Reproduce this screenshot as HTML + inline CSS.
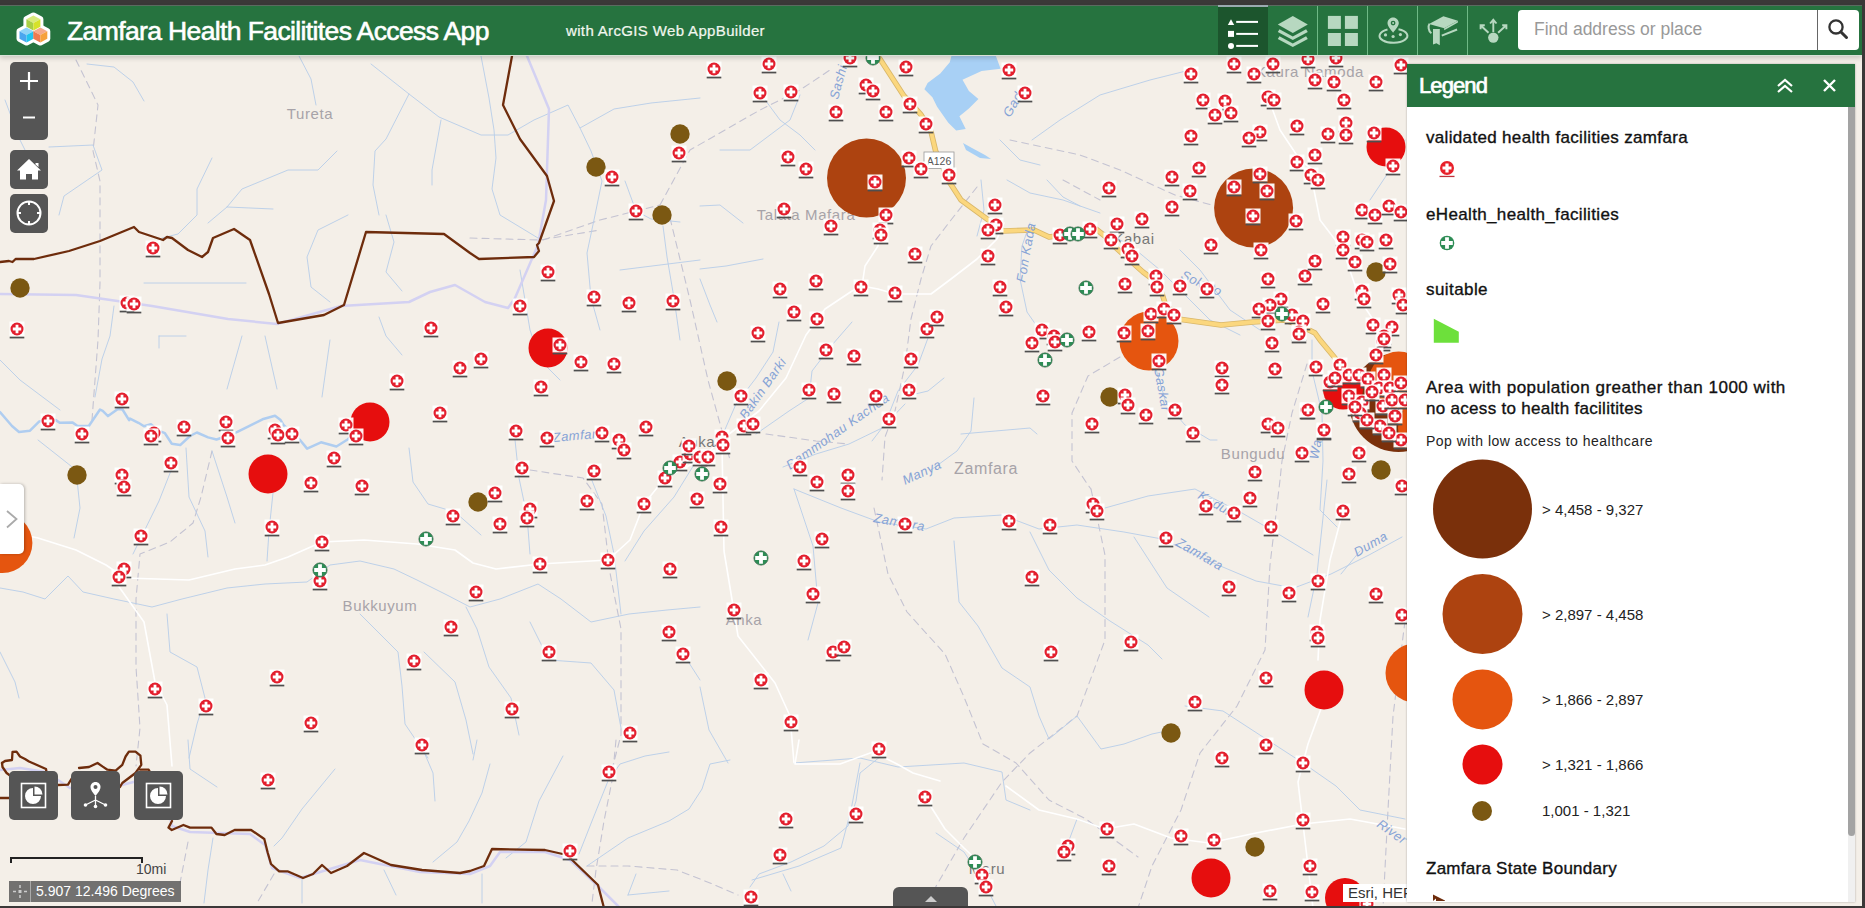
<!DOCTYPE html>
<html><head><meta charset="utf-8">
<style>
*{box-sizing:border-box;margin:0;padding:0}
html,body{width:1865px;height:908px;overflow:hidden;background:#f4efe8;font-family:"Liberation Sans",sans-serif}
#map{position:absolute;left:0;top:0}
#topstrip{position:absolute;left:0;top:0;width:1865px;height:5px;background:#3b3838}
#header{position:absolute;left:0;top:5px;width:1862px;height:50px;background:#26733f;border-top:1px solid #5b6a60;box-shadow:0 1px 0 #d8e2d8,0 3px 5px rgba(0,0,0,.18)}
#title{position:absolute;left:67px;top:10px;color:#fff;font-size:26.5px;letter-spacing:-0.62px;white-space:nowrap;-webkit-text-stroke:0.6px #fff}
#subtitle{position:absolute;left:566px;top:16px;color:#eef5ea;font-size:15px;letter-spacing:0.35px;white-space:nowrap;-webkit-text-stroke:0.2px #fff}
.tab{position:absolute;top:0;width:50px;height:50px}
.tab.active{background:#1c552d;border-top:2px solid #9aa9b0}
.div{position:absolute;top:0;width:1px;height:50px;background:#6fb986}
#search{position:absolute;left:1518px;top:4px;width:340px;height:42px;background:#fff;border-radius:4px}
#search .ph{position:absolute;left:16px;top:10px;font-size:19px;color:#999}
#search .sep{position:absolute;left:298px;top:0;width:1px;height:42px;background:#777}
#rborder{position:absolute;left:1862px;top:0;width:3px;height:908px;background:#3b3838}
#bborder{position:absolute;left:0;top:906px;width:1865px;height:2px;background:#3b3838}
#legend{position:absolute;left:1407px;top:64px;width:448px;height:838px;background:#fff;box-shadow:0 0 2px rgba(0,0,0,.3)}
#lhead{position:absolute;left:0;top:0;width:448px;height:43px;background:#26733f}
#lhead .t{position:absolute;left:12px;top:9px;font-size:22px;letter-spacing:-0.9px;color:#fff;-webkit-text-stroke:0.7px #fff}
#ltrack{position:absolute;left:441px;top:43px;width:7px;height:795px;background:#f0f0f0}
#lthumb{position:absolute;left:441px;top:43px;width:7px;height:729px;background:#a3a3a3;border-radius:0 0 4px 4px}
.lt{position:absolute;left:19px;font-size:17px;color:#111;white-space:nowrap;-webkit-text-stroke:0.35px #111}
.ls{position:absolute;left:19px;font-size:14px;color:#222;white-space:nowrap}
.lv{position:absolute;left:135px;font-size:15px;color:#222;white-space:nowrap}
.ctl{position:absolute;background:#555;border-radius:5px}
#coords{position:absolute;left:9px;top:881px;width:172px;height:21px;background:rgba(90,90,90,.85)}
#coords .tx{position:absolute;left:27px;top:2px;font-size:14px;color:#fff;white-space:nowrap}
#coords .sep{position:absolute;left:21px;top:0;width:1px;height:21px;background:#aaa}
#attr{position:absolute;left:1343px;top:884px;width:64px;height:18px;background:#fff;font-size:15px;line-height:17px;color:#333;padding-left:5px;white-space:nowrap;overflow:hidden}
#scale{position:absolute;left:10px;top:857px;width:133px;height:6px;border:2px solid #222;border-bottom:none}
#scaletx{position:absolute;left:136px;top:861px;font-size:14px;color:#444}
#panelbtn{position:absolute;left:0;top:484px;width:24px;height:70px;background:#fff;border-radius:0 5px 5px 0;box-shadow:1px 0 3px rgba(0,0,0,.25)}
#bottombtn{position:absolute;left:893px;top:887px;width:75px;height:21px;background:#555;border-radius:6px 6px 0 0}
</style></head><body>
<svg id="map" width="1865" height="908" viewBox="0 0 1865 908">
<defs>
<g id="m"><rect x="-7.5" y="-7.5" width="15" height="15" fill="#fff" fill-opacity="0.95"/><circle r="6.5" fill="#e31e2d"/><path d="M-1.4,-4.2h2.8v2.8h2.8v2.8h-2.8v2.8h-2.8v-2.8h-2.8v-2.8h2.8z" fill="#fff"/><rect x="-7.3" y="7.7" width="14.6" height="1.7" fill="#4e4e4e"/></g>
<g id="g"><circle r="7.2" fill="#2d8c55" stroke="#4a6a55" stroke-width="0.6"/><path d="M-1.9,-5.8h3.8v3.9h3.9v3.8h-3.9v3.9h-3.8v-3.9h-3.9v-3.8h3.9z" fill="#fff"/></g>
</defs>
<rect x="0" y="0" width="1865" height="908" fill="#f4efe8"/>
<g fill="none" stroke-linejoin="round" stroke-linecap="round">
<!-- admin dashed lines -->
<g stroke="#c4c3d2" stroke-width="1.1" stroke-dasharray="7,5">
<path d="M76,60 L98,105 L93,151 L100,181 L100,283 L98,340 L92,420"/>
<path d="M212,451 L201,497 L193,523 L170,542 L140,554 L136,599 L136,667 L140,728 L136,766"/>
<path d="M530,470 L583,478 L602,504 L610,573 L621,629 L621,735 L610,777"/>
<path d="M543,240 L600,220 L660,205"/>
<path d="M660,205 L690,150 L760,110 L800,90 L830,70"/>
<path d="M470,238 L540,240 L600,230"/>
<path d="M670,218 L690,300 L708,380 L730,460"/>
<path d="M1010,140 L1080,155 L1120,170 L1175,195 L1230,210"/>

<path d="M874,508 L888,574 L907,612 L945,654 L964,697 L983,744 L1016,763 L1049,800 L1086,819 L1138,857"/>
<path d="M1091,489 L1105,555 L1105,640 L1077,716 L1030,753 L1002,782 L964,838 L931,895"/>
<path d="M1280,480 L1270,565 L1265,650 L1237,706 L1200,753 L1181,810 L1152,866 L1138,908"/>
<path d="M1405,621 L1393,716 L1388,810 L1383,908"/>

<path d="M616,740 L612,781 L604,821 L596,870 L592,903"/>
<path d="M587,866 L628,866 L677,870 L710,883 L738,895"/>
<path d="M188,842 L180,883"/>
<path d="M274,874 L257,903"/>

<path d="M977,187 L951,220 L931,246 L921,279 L911,319 L905,365 L895,411 L885,437 L882,480"/>
<path d="M766,434 L816,441 L849,444"/>
<path d="M1063,180 L1100,200"/>

<path d="M1120,357 L1088,376 L1072,413 L1072,461 L1088,485 L1091,489"/>
<path d="M1307,364 L1292,413 L1282,461 L1280,480"/>
</g>
<!-- streams -->
<g stroke="#b7cde9" stroke-width="0.9">
<path d="M720,150 L750,150 L770,135 L790,120 L800,95"/>
<path d="M760,93 L780,120 L800,135 L815,150"/>
<path d="M1032,140 L1060,120 L1100,95 L1150,80 L1190,70"/>
<path d="M1000,140 L1020,160 L1040,165"/>
<path d="M1180,250 L1200,270 L1230,310 L1260,330"/>
<path d="M1100,230 L1130,245 L1160,270 L1190,300 L1210,320 L1240,335"/>
<path d="M1405,140 L1390,170 L1370,200"/>

<path d="M87,64 L114,67 L133,82 L144,101"/>
<path d="M49,147 L93,145 L102,170 L64,196 L59,215"/>
<path d="M299,56 L311,79 L316,105"/>
<path d="M371,64 L409,94 L439,117 L481,135 L508,135 L534,120 L568,105 L580,128 L614,109 L651,103 L700,98"/>
<path d="M409,94 L386,139 L375,151 L373,185 L379,215"/>
<path d="M441,120 L432,170 L432,185"/>
<path d="M481,56 L489,98 L494,130 L496,158 L492,189 L500,215 L538,238"/>
<path d="M212,158 L197,189 L197,215 L178,234 L162,238"/>
<path d="M337,151 L318,170 L288,170 L242,189 L227,207 L208,223"/>
<path d="M273,209 L227,207"/>
<path d="M348,215 L318,230 L307,257 L311,287 L330,302"/>
<path d="M386,215 L394,242 L386,272 L402,291"/>
<path d="M580,128 L591,151 L602,181 L595,215 L587,253 L591,298 L600,330"/>
<path d="M625,181 L636,211 L651,219 L680,222"/>
<path d="M663,226 L667,257 L674,298 L680,340"/>
<path d="M114,306 L110,336 L102,359 L95,397"/>
<path d="M144,283 L246,283"/>
<path d="M159,336 L186,336 M159,336 L159,348"/>
<path d="M242,336 L227,389"/>
<path d="M265,336 L277,389"/>
<path d="M330,340 L322,397"/>
<path d="M379,317 L386,336 L402,355"/>
<path d="M5,100 L20,140 L30,160"/>
<path d="M0,360 L20,380 L40,395 L60,410"/>
<path d="M520,270 L530,330 L540,360 L560,380"/>
<path d="M620,270 L660,265 L700,260"/>

<path d="M0,588 L23,592 L45,599 L68,576 L83,592 L114,599 L152,607 L182,599 L227,588 L265,584 L307,582 L330,565 L360,561 L394,569 L417,580 L447,595 L470,607 L500,599 L538,584 L561,599 L591,622 L629,614 L667,610 L700,607"/>
<path d="M360,614 L398,652 L402,686 L405,724 L428,758"/>
<path d="M424,652 L455,682 L466,720 L473,754"/>
<path d="M466,607 L477,629 L489,667 L511,698 L519,735"/>
<path d="M530,622 L549,660 L591,663 L614,690 L621,728"/>
<path d="M167,614 L170,652 L197,667 L205,698 L197,724 L189,758"/>
<path d="M0,652 L15,682 L19,698"/>
<path d="M38,440 L76,470 L80,508 L74,538"/>
<path d="M174,463 L159,501 L133,554"/>
<path d="M186,448 L189,497 L205,531 L208,557"/>
<path d="M212,451 L227,497 L235,523"/>
<path d="M273,493 L269,531 L267,561"/>
<path d="M409,448 L413,482 L428,504 L455,512 L481,535"/>
<path d="M515,440 L519,478 L527,516 L530,554"/>
<path d="M591,478 L606,516 L614,554 L621,614"/>
<path d="M682,652 L700,680"/>

<path d="M794,489 L841,508 L879,522 L926,529 L954,518 L1002,515 L1039,529 L1077,525 L1124,532 L1162,539 L1218,565 L1256,581 L1294,588 L1331,574 L1369,555 L1402,537"/>
<path d="M1105,508 L1148,496 L1195,489 L1242,513 L1275,532 L1313,555"/>
<path d="M1030,532 L1049,570 L1077,598 L1110,621 L1148,645 L1162,659"/>
<path d="M954,541 L959,602 L978,626 L1002,668 L1030,687 L1039,716 L1049,739 L1077,716 L1101,749 L1124,744 L1152,734 L1171,730"/>
<path d="M1134,537 L1167,588 L1209,617"/>
<path d="M1185,706 L1223,711 L1266,739 L1303,763 L1336,786 L1360,810 L1405,819"/>
<path d="M1327,480 L1322,527 L1317,574 L1308,617"/>
<path d="M1360,551 L1341,574"/>
<path d="M794,489 L813,546 L818,603 L808,640"/>
<path d="M700,687 L709,730 L728,763"/>
<path d="M1068,843 L1077,819 L1105,829"/>

<path d="M794,763 L860,758 L898,767 L964,763 L1002,772 L1006,800 L1030,810"/>
<path d="M860,763 L851,810 L841,848 L799,866 L752,880"/>
<path d="M936,833 L964,852 L983,881 L997,908"/>
<path d="M188,740 L190,769 L217,787"/>
<path d="M335,769 L302,809 L282,838 L274,846"/>
<path d="M424,752 L433,773 L435,801"/>
<path d="M477,740 L473,760"/>
<path d="M490,764 L482,793 L469,821 L457,842 L433,862"/>
<path d="M563,756 L539,801 L526,842 L506,858"/>
<path d="M669,752 L645,756 L620,764 L608,781 L592,821 L579,854"/>
<path d="M730,760 L710,764 L702,789 L689,809 L669,821 L628,838 L587,866"/>
<path d="M881,756 L860,773 L856,801 L848,826 L824,846 L791,862 L759,874 L750,887"/>
<path d="M783,874 L791,891"/>
<path d="M384,870 L396,895"/>
<path d="M213,838 L208,870 L204,903"/>
<path d="M302,879 L302,903"/>
<path d="M482,874 L482,903"/>
<path d="M636,874 L628,895 M628,895 L669,891"/>

<path d="M700,455 L674,497 L644,531 L625,561"/>
<path d="M1030,223 L1022,246 L1020,279 L1027,312 L1043,335"/>
<path d="M779,322 L773,352 L756,378 L736,404 L720,441"/>
<path d="M852,322 L832,345 L812,371 L809,398 L789,411 L756,434"/>
<path d="M928,338 L918,365 L898,391 L885,424 L872,441"/>
<path d="M944,378 L928,391 L911,395"/>
<path d="M783,467 L816,454 L849,444 L882,428 L905,404"/>
<path d="M974,398 L971,431 L957,451 L931,470"/>
<path d="M700,269 L726,266 L763,259"/>
<path d="M700,206 L720,205 L743,223"/>
<path d="M700,279 L710,305 L717,322"/>
<path d="M981,180 L984,210 L977,236"/>
<path d="M1007,180 L1030,193 L1063,200 L1100,213"/>
<path d="M1047,180 L1063,197 L1080,206"/>
<path d="M961,434 L1030,428 L1037,434"/>

<path d="M1156,369 L1166,403 L1185,425 L1210,440 L1217,440"/>
<path d="M1312,340 L1312,371 L1322,413 L1323,461 L1320,510 L1337,527"/>
</g>
<!-- wide rivers -->
<g stroke="#afcdf0" stroke-width="2.5">
<path d="M0,412 L12,426 L19,432 L30,430.7 L39.3,421.4 L47,420 L55.8,420.1 L59.7,422.8 L72.3,422.4 L77.6,426 L88.8,426 L100,409.5 L102.7,410.9 L108,416.1 L117.9,408.9 L122.5,409.5 L129.1,420.1 L130,418.6 L138.4,422.8 L144,426.3 L150.9,424.2 L157.9,430.4 L164.9,433.2 L171.8,443.7 L180.2,445.1 L190,436 L196.9,432.5 L208.1,437.4 L216.5,439.5 L224.8,436.7 L237.4,431.8 L248.5,426.3 L262.5,419.3 L275,415.8 L280.6,420 L283.4,424.9 L300.2,440.2 L307.1,448.6 L321,442.3 L336.4,446.5 L347.6,439.5 L353.1,434.6 L360,432 L370,422"/>
</g>
<g stroke="#d3d1f2" stroke-width="2.5">
<path d="M0,294 L76,295 L152,306 L228,319 L277,324 L341,306 L409,302 L430,292 L455,285 L485,302 L508,308 L515,298 L538,245 L546,200 L549,109 L527,56"/>
<path d="M0,770 L20,768 L46,772 L70,788 L122,785 L160,775 L172,826 L190,832 L250,834 L265,845 L272,868 L300,878 L360,860 L420,872 L470,874 L490,866 L500,852 L545,852 L570,860 L600,888 L620,908"/>
</g>
<!-- white roads -->
<g stroke="#ffffff" stroke-width="1.6">
<path d="M0,530 L38,538 L76,550 L106,565 L125,578 L189,580 L235,569 L265,565 L288,557 L322,542 L364,540 L417,544 L455,550 L473,563 L496,569 L540,564 L608,560 L630,540 L644,504 L665,478 L700,460 L720,441 L759,411 L786,378 L806,335 L825,309 L852,291 L862,286 L878,289 L895,294 L931,294 L951,279 L977,259 L997,239 L1004,223"/>
<path d="M862,286 L865,266 L878,246 L880,233"/>
<path d="M722,445 L724,551 L738,636 L775,683 L790,716 L794,763"/>
<path d="M1006,786 L1039,810 L1077,819 L1105,829 L1134,824 L1171,838 L1209,843 L1256,833 L1303,824 L1350,819 L1405,829"/>
<path d="M1322,706 L1308,744 L1298,782 L1303,824 L1308,866 L1313,908"/>
<path d="M921,791 L945,829 L964,848 L983,866"/>
<path d="M117,584 L144,622 L155,682 L167,705 L172,766"/>
<path d="M1343,511 L1330,560 L1320,620 L1318,660"/>
<path d="M1311,175 L1320,220 L1343,250 L1360,300 L1380,330"/>
<path d="M1268,97 L1280,130 L1300,160 L1320,175"/>
</g>
<path d="M799,740 L795,764 L840,764 L873,752 L897,764 L913,773 L940,781" stroke="#fff" stroke-width="1.6"/>
<!-- main road -->
<path d="M880,59 L903.8,95.7 L921,114.7 L930.8,130.6 L935.6,151 L950,183 L961,200 L987,219 L1003,231 L1034,230 L1049,237 L1071,234 L1096,229 L1106,237 L1115,247 L1143,272 L1159,284 L1165,303 L1178,319 L1221,325 L1253,322 L1284,320 L1299,325 L1315,333 L1320,340 L1335,358" stroke="#d9b76a" stroke-width="5.5"/>
<path d="M880,59 L903.8,95.7 L921,114.7 L930.8,130.6 L935.6,151 L950,183 L961,200 L987,219 L1003,231 L1034,230 L1049,237 L1071,234 L1096,229 L1106,237 L1115,247 L1143,272 L1159,284 L1165,303 L1178,319 L1221,325 L1253,322 L1284,320 L1299,325 L1315,333 L1320,340 L1335,358" stroke="#fbd77e" stroke-width="3.8"/>
</g>
<!-- lake -->
<path d="M951.4,56 L995.9,56 L1000.6,68.7 L981.6,71 L962.5,79.8 L968.9,90.9 L978.4,98.9 L968.9,108.4 L959.4,116.3 L965.7,129 L956.2,130.6 L948.3,122.7 L937.1,106.8 L932.4,97.3 L924.4,89.3 L927.6,83 L940.3,73.5 L949.8,62.3 Z" fill="#a8d0f5"/>
<path d="M963,143 L972,148 L985,155 L991,159 L980,158 L966,150 Z" fill="#a8d0f5"/>
<!-- shield -->
<rect x="924" y="152" width="30" height="16.5" fill="#fff" stroke="#9a9a9a" stroke-width="0.8"/>
<text x="939" y="164.5" font-family="Liberation Sans, sans-serif" font-size="10.5" fill="#555" text-anchor="middle">A126</text>
<!-- boundary -->
<g fill="none" stroke="#6e2c0c" stroke-width="2.3" stroke-linejoin="round" stroke-linecap="round">
<path d="M0,262 L9,261 L12.5,262 L15.6,259 L34,259 L69,251 L100,241 L134,227 L139,232 L163,240 L167,237 L172,238 L188,250 L202,257 L208,252 L213,238 L234,229 L250,240 L269,294 L278,323 L324,315 L344,305 L366,232 L444,234 L470,253 L479,259 L534,257 L539,251 L537,245 L539,243 L554,201 L547,176 L520,139 L503,105 L512,56"/>
<path d="M9,798 L0,798"/>
<path d="M2,763 L5,761 L12,760 L12.5,752 L16.5,751.6 L20,756.5 L25,759 L29,761.5 L46,769 L47,775"/>
<path d="M2,763 L2.5,767 L6.6,773 L12,777"/>
<path d="M58,785 L68,784.6 L72,778"/>
<path d="M79,768 L89,767 L97.5,763 L102.4,766.4 L107.4,769.7 L115.6,770.6 L122.3,764.8 L125.6,756.5 L128.9,751.6 L135.5,751.6 L140.4,755.7 L141.3,764.8 L135.5,773 L128.9,778 L122.3,783 L120,787"/>
<path d="M140,769.7 L148.7,769.7 L150,772"/>
<path d="M172,821 L168.5,827.6 L171.8,830 L183.4,825 L190,827.6 L211.5,827.6 L216.4,834 L224.7,835 L234.6,830 L251.1,830 L264.3,839 L267.6,852.3 L271,864 L279.2,871.3 L287.5,871.3 L303,878 L313,874 L322,865 L331,873 L347,866 L364,853 L391,865 L422,870 L460,873 L470,871 L484,866 L492,849 L545,850 L567,855 L598,885 L604,908"/>
</g>
<!-- labels -->
<g font-family="Liberation Sans, sans-serif" fill="#a7a3a8" font-size="15" letter-spacing="0.6" text-anchor="middle">
<text x="310" y="119">Tureta</text>
<text x="806" y="220">Talata Mafara</text>
<text x="1310" y="77">Kaura Namoda</text>
<text x="986" y="474" font-size="16">Zamfara</text>
<text x="1253" y="459">Bungudu</text>
<text x="380" y="611">Bukkuyum</text>
<text x="697" y="447" fill="#777">Anka</text>
<text x="744" y="625">Anka</text>
<text x="987" y="874" fill="#777">Maru</text>
<text x="1134" y="244" fill="#777">Kabai</text>
</g>
<g font-family="Liberation Sans, sans-serif" fill="#86a3d6" font-size="13" font-style="italic" letter-spacing="0.5">
<text transform="translate(838,100) rotate(-75)">Sashi</text>
<text transform="translate(1010,118) rotate(-60)">Gada</text>
<text transform="translate(1025,283) rotate(-80)">Fon Kada</text>
<text transform="translate(746,420) rotate(-55)">Bakin Barki</text>
<text transform="translate(790,470) rotate(-35)">Dammohau Kachea</text>
<text transform="translate(905,485) rotate(-25)">Manya</text>
<text transform="translate(553,442) rotate(-5)">Zamfara</text>
<text transform="translate(873,522) rotate(10)">Zamfara</text>
<text transform="translate(1175,545) rotate(30)">Zamfara</text>
<text transform="translate(1197,498) rotate(30)">Kaduna</text>
<text transform="translate(1357,557) rotate(-30)">Duma</text>
<text transform="translate(1154,368) rotate(80)">Gaskar</text>
<text transform="translate(1318,460) rotate(-80)">Wa</text>
<text transform="translate(1376,826) rotate(35)">River</text>
<text transform="translate(1180,278) rotate(25)">Sokoto</text>
</g>

<circle cx="1398.5" cy="402.5" r="49.5" fill="#7a300b"/>
<circle cx="1428" cy="428" r="30" fill="#e5550f"/>
<circle cx="866.5" cy="178" r="39.5" fill="#ad4310"/>
<circle cx="1253.6" cy="208" r="39.5" fill="#ad4310"/>
<circle cx="1149" cy="341" r="29.5" fill="#e5550f"/>
<circle cx="1398.7" cy="381.6" r="30" fill="#e5550f"/>
<circle cx="2.4" cy="543" r="30" fill="#e5550f"/>
<circle cx="1415" cy="673" r="29.5" fill="#e5550f"/>
<circle cx="1386" cy="147" r="19.5" fill="#e60e0e"/>
<circle cx="268" cy="474" r="19.5" fill="#e60e0e"/>
<circle cx="370" cy="422" r="19.5" fill="#e60e0e"/>
<circle cx="548" cy="348" r="19.5" fill="#e60e0e"/>
<circle cx="1343" cy="389.5" r="20" fill="#e60e0e"/>
<circle cx="1324" cy="690" r="19.5" fill="#e60e0e"/>
<circle cx="1211" cy="878" r="19.5" fill="#e60e0e"/>
<circle cx="1345" cy="898" r="20" fill="#e60e0e"/>
<circle cx="20" cy="288" r="9.7" fill="#7b5812"/>
<circle cx="680" cy="134" r="9.7" fill="#7b5812"/>
<circle cx="596" cy="167" r="9.7" fill="#7b5812"/>
<circle cx="662" cy="215" r="9.7" fill="#7b5812"/>
<circle cx="1376" cy="272" r="9.7" fill="#7b5812"/>
<circle cx="77" cy="475" r="9.7" fill="#7b5812"/>
<circle cx="727" cy="381" r="9.7" fill="#7b5812"/>
<circle cx="478" cy="502" r="9.7" fill="#7b5812"/>
<circle cx="1110" cy="397" r="9.7" fill="#7b5812"/>
<circle cx="1381" cy="470" r="9.7" fill="#7b5812"/>
<circle cx="1171" cy="733" r="9.7" fill="#7b5812"/>
<circle cx="1255" cy="847" r="9.7" fill="#7b5812"/>
<use href="#m" x="153" y="248"/>
<use href="#m" x="127" y="303"/>
<use href="#m" x="134" y="304"/>
<use href="#m" x="17" y="329"/>
<use href="#m" x="431" y="328"/>
<use href="#m" x="714" y="69"/>
<use href="#m" x="769" y="64"/>
<use href="#m" x="850" y="58"/>
<use href="#m" x="906" y="67"/>
<use href="#m" x="760" y="93"/>
<use href="#m" x="791" y="92"/>
<use href="#m" x="866" y="85"/>
<use href="#m" x="873" y="91"/>
<use href="#m" x="836" y="112"/>
<use href="#m" x="886" y="112"/>
<use href="#m" x="910" y="104"/>
<use href="#m" x="926" y="124"/>
<use href="#m" x="788" y="157"/>
<use href="#m" x="806" y="169"/>
<use href="#m" x="909" y="158"/>
<use href="#m" x="921" y="169"/>
<use href="#m" x="679" y="153"/>
<use href="#m" x="612" y="177"/>
<use href="#m" x="636" y="211"/>
<use href="#m" x="784" y="209"/>
<use href="#m" x="831" y="226"/>
<use href="#m" x="875" y="182"/>
<use href="#m" x="886" y="215"/>
<use href="#m" x="880" y="230"/>
<use href="#m" x="881" y="235"/>
<use href="#m" x="915" y="254"/>
<use href="#m" x="548" y="272"/>
<use href="#m" x="594" y="297"/>
<use href="#m" x="629" y="303"/>
<use href="#m" x="673" y="301"/>
<use href="#m" x="520" y="306"/>
<use href="#m" x="780" y="289"/>
<use href="#m" x="816" y="281"/>
<use href="#m" x="861" y="287"/>
<use href="#m" x="895" y="293"/>
<use href="#m" x="794" y="312"/>
<use href="#m" x="817" y="319"/>
<use href="#m" x="758" y="333"/>
<use href="#m" x="927" y="329"/>
<use href="#m" x="937" y="317"/>
<use href="#m" x="1009" y="70"/>
<use href="#m" x="1025" y="93"/>
<use href="#m" x="949" y="175"/>
<use href="#m" x="995" y="205"/>
<use href="#m" x="996" y="225"/>
<use href="#m" x="988" y="230"/>
<use href="#m" x="988" y="256"/>
<use href="#m" x="1000" y="287"/>
<use href="#m" x="1006" y="307"/>
<use href="#m" x="1060" y="235"/>
<use href="#m" x="1090" y="229"/>
<use href="#m" x="1109" y="188"/>
<use href="#m" x="1117" y="224"/>
<use href="#m" x="1142" y="219"/>
<use href="#m" x="1111" y="240"/>
<use href="#m" x="1128" y="249"/>
<use href="#m" x="1132" y="256"/>
<use href="#m" x="1125" y="284"/>
<use href="#m" x="1156" y="276"/>
<use href="#m" x="1157" y="287"/>
<use href="#m" x="1180" y="286"/>
<use href="#m" x="1207" y="289"/>
<use href="#m" x="1172" y="177"/>
<use href="#m" x="1199" y="168"/>
<use href="#m" x="1190" y="191"/>
<use href="#m" x="1172" y="207"/>
<use href="#m" x="1191" y="74"/>
<use href="#m" x="1191" y="136"/>
<use href="#m" x="1234" y="64"/>
<use href="#m" x="1273" y="64"/>
<use href="#m" x="1254" y="74"/>
<use href="#m" x="1308" y="59"/>
<use href="#m" x="1336" y="58"/>
<use href="#m" x="1315" y="80"/>
<use href="#m" x="1334" y="82"/>
<use href="#m" x="1376" y="82"/>
<use href="#m" x="1401" y="65"/>
<use href="#m" x="1203" y="100"/>
<use href="#m" x="1225" y="101"/>
<use href="#m" x="1231" y="113"/>
<use href="#m" x="1215" y="115"/>
<use href="#m" x="1268" y="97"/>
<use href="#m" x="1274" y="100"/>
<use href="#m" x="1344" y="100"/>
<use href="#m" x="1297" y="126"/>
<use href="#m" x="1346" y="123"/>
<use href="#m" x="1346" y="135"/>
<use href="#m" x="1328" y="134"/>
<use href="#m" x="1374" y="133"/>
<use href="#m" x="1260" y="132"/>
<use href="#m" x="1249" y="138"/>
<use href="#m" x="1297" y="162"/>
<use href="#m" x="1315" y="155"/>
<use href="#m" x="1311" y="175"/>
<use href="#m" x="1318" y="180"/>
<use href="#m" x="1393" y="166"/>
<use href="#m" x="1234" y="187"/>
<use href="#m" x="1260" y="174"/>
<use href="#m" x="1267" y="191"/>
<use href="#m" x="1253" y="216"/>
<use href="#m" x="1296" y="221"/>
<use href="#m" x="1211" y="245"/>
<use href="#m" x="1261" y="250"/>
<use href="#m" x="1268" y="279"/>
<use href="#m" x="1305" y="276"/>
<use href="#m" x="1315" y="261"/>
<use href="#m" x="1343" y="237"/>
<use href="#m" x="1343" y="250"/>
<use href="#m" x="1355" y="262"/>
<use href="#m" x="1362" y="240"/>
<use href="#m" x="1367" y="242"/>
<use href="#m" x="1386" y="240"/>
<use href="#m" x="1390" y="264"/>
<use href="#m" x="1362" y="210"/>
<use href="#m" x="1375" y="215"/>
<use href="#m" x="1389" y="206"/>
<use href="#m" x="1401" y="212"/>
<use href="#m" x="1323" y="304"/>
<use href="#m" x="1362" y="291"/>
<use href="#m" x="1364" y="299"/>
<use href="#m" x="1399" y="295"/>
<use href="#m" x="1403" y="305"/>
<use href="#m" x="1281" y="299"/>
<use href="#m" x="1270" y="305"/>
<use href="#m" x="1259" y="309"/>
<use href="#m" x="1292" y="315"/>
<use href="#m" x="1268" y="321"/>
<use href="#m" x="1303" y="321"/>
<use href="#m" x="1299" y="332"/>
<use href="#m" x="1373" y="325"/>
<use href="#m" x="1392" y="327"/>
<use href="#m" x="1384" y="336"/>
<use href="#m" x="1151" y="314"/>
<use href="#m" x="1164" y="309"/>
<use href="#m" x="1174" y="315"/>
<use href="#m" x="1148" y="331"/>
<use href="#m" x="1124" y="333"/>
<use href="#m" x="1089" y="332"/>
<use href="#m" x="1042" y="330"/>
<use href="#m" x="1054" y="336"/>
<use href="#m" x="122" y="399"/>
<use href="#m" x="48" y="421"/>
<use href="#m" x="82" y="434"/>
<use href="#m" x="154" y="433"/>
<use href="#m" x="151" y="436"/>
<use href="#m" x="184" y="427"/>
<use href="#m" x="226" y="422"/>
<use href="#m" x="228" y="438"/>
<use href="#m" x="275" y="430"/>
<use href="#m" x="278" y="435"/>
<use href="#m" x="292" y="434"/>
<use href="#m" x="346" y="425"/>
<use href="#m" x="356" y="436"/>
<use href="#m" x="334" y="458"/>
<use href="#m" x="171" y="463"/>
<use href="#m" x="122" y="475"/>
<use href="#m" x="124" y="487"/>
<use href="#m" x="311" y="483"/>
<use href="#m" x="362" y="486"/>
<use href="#m" x="397" y="381"/>
<use href="#m" x="460" y="368"/>
<use href="#m" x="440" y="413"/>
<use href="#m" x="453" y="516"/>
<use href="#m" x="272" y="527"/>
<use href="#m" x="141" y="536"/>
<use href="#m" x="322" y="542"/>
<use href="#m" x="124" y="569"/>
<use href="#m" x="119" y="577"/>
<use href="#m" x="320" y="581"/>
<use href="#m" x="481" y="359"/>
<use href="#m" x="581" y="362"/>
<use href="#m" x="614" y="364"/>
<use href="#m" x="541" y="387"/>
<use href="#m" x="560" y="345"/>
<use href="#m" x="516" y="431"/>
<use href="#m" x="547" y="438"/>
<use href="#m" x="602" y="433"/>
<use href="#m" x="619" y="440"/>
<use href="#m" x="624" y="450"/>
<use href="#m" x="646" y="427"/>
<use href="#m" x="522" y="468"/>
<use href="#m" x="594" y="471"/>
<use href="#m" x="495" y="493"/>
<use href="#m" x="530" y="509"/>
<use href="#m" x="527" y="518"/>
<use href="#m" x="500" y="524"/>
<use href="#m" x="587" y="501"/>
<use href="#m" x="644" y="504"/>
<use href="#m" x="665" y="478"/>
<use href="#m" x="680" y="462"/>
<use href="#m" x="690" y="454"/>
<use href="#m" x="689" y="446"/>
<use href="#m" x="700" y="457"/>
<use href="#m" x="708" y="457"/>
<use href="#m" x="722" y="437"/>
<use href="#m" x="723" y="445"/>
<use href="#m" x="720" y="484"/>
<use href="#m" x="697" y="499"/>
<use href="#m" x="721" y="527"/>
<use href="#m" x="741" y="396"/>
<use href="#m" x="744" y="426"/>
<use href="#m" x="753" y="424"/>
<use href="#m" x="809" y="390"/>
<use href="#m" x="834" y="394"/>
<use href="#m" x="876" y="396"/>
<use href="#m" x="909" y="390"/>
<use href="#m" x="826" y="350"/>
<use href="#m" x="854" y="356"/>
<use href="#m" x="911" y="359"/>
<use href="#m" x="889" y="419"/>
<use href="#m" x="800" y="467"/>
<use href="#m" x="817" y="482"/>
<use href="#m" x="848" y="475"/>
<use href="#m" x="848" y="491"/>
<use href="#m" x="905" y="524"/>
<use href="#m" x="822" y="539"/>
<use href="#m" x="804" y="561"/>
<use href="#m" x="813" y="594"/>
<use href="#m" x="734" y="610"/>
<use href="#m" x="608" y="560"/>
<use href="#m" x="670" y="569"/>
<use href="#m" x="540" y="564"/>
<use href="#m" x="476" y="592"/>
<use href="#m" x="1032" y="343"/>
<use href="#m" x="1055" y="342"/>
<use href="#m" x="1272" y="343"/>
<use href="#m" x="1383" y="342"/>
<use href="#m" x="1159" y="361"/>
<use href="#m" x="1222" y="368"/>
<use href="#m" x="1222" y="385"/>
<use href="#m" x="1275" y="369"/>
<use href="#m" x="1316" y="367"/>
<use href="#m" x="1043" y="396"/>
<use href="#m" x="1125" y="395"/>
<use href="#m" x="1128" y="405"/>
<use href="#m" x="1146" y="415"/>
<use href="#m" x="1175" y="410"/>
<use href="#m" x="1193" y="433"/>
<use href="#m" x="1092" y="424"/>
<use href="#m" x="1268" y="424"/>
<use href="#m" x="1278" y="428"/>
<use href="#m" x="1307" y="410"/>
<use href="#m" x="1324" y="431"/>
<use href="#m" x="1302" y="453"/>
<use href="#m" x="1359" y="453"/>
<use href="#m" x="1349" y="474"/>
<use href="#m" x="1402" y="486"/>
<use href="#m" x="1255" y="472"/>
<use href="#m" x="1250" y="498"/>
<use href="#m" x="1206" y="506"/>
<use href="#m" x="1234" y="513"/>
<use href="#m" x="1271" y="527"/>
<use href="#m" x="1343" y="511"/>
<use href="#m" x="1093" y="504"/>
<use href="#m" x="1097" y="511"/>
<use href="#m" x="1009" y="521"/>
<use href="#m" x="1050" y="525"/>
<use href="#m" x="1166" y="538"/>
<use href="#m" x="1032" y="577"/>
<use href="#m" x="1229" y="587"/>
<use href="#m" x="1289" y="593"/>
<use href="#m" x="1318" y="581"/>
<use href="#m" x="1376" y="594"/>
<use href="#m" x="1402" y="615"/>
<use href="#m" x="1299" y="334"/>
<use href="#m" x="1384" y="339"/>
<use href="#m" x="1376" y="355"/>
<use href="#m" x="1340" y="365"/>
<use href="#m" x="1330" y="382"/>
<use href="#m" x="1349" y="375"/>
<use href="#m" x="1359" y="375"/>
<use href="#m" x="1368" y="379"/>
<use href="#m" x="1384" y="375"/>
<use href="#m" x="1379" y="388"/>
<use href="#m" x="1390" y="388"/>
<use href="#m" x="1401" y="383"/>
<use href="#m" x="1349" y="396"/>
<use href="#m" x="1362" y="402"/>
<use href="#m" x="1383" y="406"/>
<use href="#m" x="1395" y="416"/>
<use href="#m" x="1360" y="413"/>
<use href="#m" x="1380" y="426"/>
<use href="#m" x="1401" y="440"/>
<use href="#m" x="1308" y="410"/>
<use href="#m" x="1324" y="430"/>
<use href="#m" x="1335" y="378"/>
<use href="#m" x="1372" y="392"/>
<use href="#m" x="1392" y="400"/>
<use href="#m" x="1367" y="420"/>
<use href="#m" x="1389" y="433"/>
<use href="#m" x="1355" y="407"/>
<use href="#m" x="1405" y="400"/>
<use href="#m" x="451" y="627"/>
<use href="#m" x="414" y="661"/>
<use href="#m" x="277" y="677"/>
<use href="#m" x="155" y="689"/>
<use href="#m" x="206" y="706"/>
<use href="#m" x="311" y="723"/>
<use href="#m" x="422" y="745"/>
<use href="#m" x="268" y="780"/>
<use href="#m" x="669" y="632"/>
<use href="#m" x="683" y="654"/>
<use href="#m" x="549" y="652"/>
<use href="#m" x="512" y="709"/>
<use href="#m" x="630" y="733"/>
<use href="#m" x="609" y="772"/>
<use href="#m" x="570" y="851"/>
<use href="#m" x="761" y="680"/>
<use href="#m" x="791" y="722"/>
<use href="#m" x="833" y="652"/>
<use href="#m" x="844" y="647"/>
<use href="#m" x="879" y="749"/>
<use href="#m" x="925" y="797"/>
<use href="#m" x="786" y="819"/>
<use href="#m" x="856" y="814"/>
<use href="#m" x="780" y="855"/>
<use href="#m" x="751" y="897"/>
<use href="#m" x="1051" y="652"/>
<use href="#m" x="1131" y="642"/>
<use href="#m" x="1317" y="632"/>
<use href="#m" x="1318" y="638"/>
<use href="#m" x="1266" y="678"/>
<use href="#m" x="1195" y="702"/>
<use href="#m" x="1266" y="745"/>
<use href="#m" x="1222" y="758"/>
<use href="#m" x="1303" y="763"/>
<use href="#m" x="1303" y="820"/>
<use href="#m" x="1107" y="829"/>
<use href="#m" x="1181" y="836"/>
<use href="#m" x="1214" y="840"/>
<use href="#m" x="1068" y="846"/>
<use href="#m" x="1064" y="852"/>
<use href="#m" x="1109" y="866"/>
<use href="#m" x="1310" y="866"/>
<use href="#m" x="1270" y="891"/>
<use href="#m" x="1312" y="892"/>
<use href="#m" x="982" y="875"/>
<use href="#m" x="986" y="887"/>
<use href="#m" x="1367" y="904"/>
<use href="#g" x="873" y="58"/>
<use href="#g" x="1070" y="234"/>
<use href="#g" x="1078" y="234"/>
<use href="#g" x="1086" y="288"/>
<use href="#g" x="1282" y="314"/>
<use href="#g" x="1067" y="340"/>
<use href="#g" x="426" y="539"/>
<use href="#g" x="320" y="570"/>
<use href="#g" x="702" y="474"/>
<use href="#g" x="670" y="468"/>
<use href="#g" x="761" y="558"/>
<use href="#g" x="1045" y="360"/>
<use href="#g" x="1326" y="407"/>
<use href="#g" x="975" y="862"/>
</svg>
<div id="topstrip"></div>
<div id="header">
 <div id="title">Zamfara Health Facilitites Access App</div>
 <div id="subtitle">with ArcGIS Web AppBuilder</div>
</div>
<svg style="position:absolute;left:0;top:0" width="1865" height="56" viewBox="0 0 1865 56">
 <g><path d="M33.4,15.5 L40.4,19.25 L40.4,26.75 L33.4,30.5 L26.4,26.75 L26.4,19.25 Z" fill="#fff" stroke="#fff" stroke-width="6" stroke-linejoin="round"/><path d="M26.5,27.5 L33.5,31.25 L33.5,38.75 L26.5,42.5 L19.5,38.75 L19.5,31.25 Z" fill="#fff" stroke="#fff" stroke-width="6" stroke-linejoin="round"/><path d="M40.3,27.5 L47.3,31.25 L47.3,38.75 L40.3,42.5 L33.3,38.75 L33.3,31.25 Z" fill="#fff" stroke="#fff" stroke-width="6" stroke-linejoin="round"/><path d="M33.4,15.5 L40.4,19.25 L33.4,23.0 L26.4,19.25 Z" fill="#d9ea7a"/><path d="M26.4,19.25 L33.4,23.0 L33.4,30.5 L26.4,26.75 Z" fill="#a9cf45"/><path d="M40.4,19.25 L33.4,23.0 L33.4,30.5 L40.4,26.75 Z" fill="#d6e22a"/><path d="M26.5,27.5 L33.5,31.25 L26.5,35.0 L19.5,31.25 Z" fill="#8fd3f7"/><path d="M19.5,31.25 L26.5,35.0 L26.5,42.5 L19.5,38.75 Z" fill="#4aa6ef"/><path d="M33.5,31.25 L26.5,35.0 L26.5,42.5 L33.5,38.75 Z" fill="#22c4ee"/><path d="M40.3,27.5 L47.3,31.25 L40.3,35.0 L33.3,31.25 Z" fill="#f4a98a"/><path d="M33.3,31.25 L40.3,35.0 L40.3,42.5 L33.3,38.75 Z" fill="#ee7a4e"/><path d="M47.3,31.25 L40.3,35.0 L40.3,42.5 L47.3,38.75 Z" fill="#f6a13c"/></g>
 <rect x="1218" y="6" width="50" height="49" fill="#1c552d"/>
 <rect x="1218" y="5" width="50" height="2" fill="#9aa9b0"/>
 <g fill="#6fb986"><rect x="1317" y="6" width="1" height="49"/><rect x="1367" y="6" width="1" height="49"/><rect x="1417" y="6" width="1" height="49"/><rect x="1467" y="6" width="1" height="49"/></g>
 <g transform="translate(1218,5)" fill="#fff">
  <path d="M13,14.3 L16.2,20 L9.8,20 Z"/>
  <rect x="10" y="25.9" width="6" height="6"/>
  <circle cx="13" cy="41" r="3"/>
  <rect x="18.2" y="15.9" width="21.8" height="2"/><rect x="18.2" y="27.9" width="21.8" height="2"/><rect x="18.2" y="39.9" width="21.8" height="2"/>
 </g>
 <g transform="translate(1268,5)" fill="#b7d8c0">
  <path d="M24.8,10.9 L39.8,19.4 L24.8,28 L9.8,19.4 Z"/>
  <path d="M11.5,24.3 L24.8,31.6 L38.1,24.3 L39.8,27 L24.8,35 L9.8,27 Z"/>
  <path d="M11.5,31.3 L24.8,38.6 L38.1,31.3 L39.8,34 L24.8,42 L9.8,34 Z"/>
 </g>
 <g transform="translate(1317,5)" fill="#b7d8c0">
  <rect x="10.9" y="10.9" width="13" height="13"/><rect x="27.9" y="10.9" width="13" height="13"/>
  <rect x="10.9" y="28" width="13" height="13"/><rect x="27.9" y="28" width="13" height="13"/>
 </g>
 <g transform="translate(1367,5)">
  <path d="M20.5,24.5 A13.9,7 0 1 0 31.5,24.3" fill="none" stroke="#b7d8c0" stroke-width="2"/>
  <path d="M26.1,27.8 C24,25 20.5,21.5 20.5,18.1 C20.5,15 23,12.4 26.1,12.4 C29.2,12.4 31.8,15 31.8,18.1 C31.8,21.5 28.2,25 26.1,27.8 Z" fill="#b7d8c0"/>
  <circle cx="26.1" cy="18.1" r="2.4" fill="#26733f"/><circle cx="26.1" cy="18.1" r="1" fill="#b7d8c0"/>
  <circle cx="18.5" cy="29.9" r="1.6" fill="#b7d8c0"/><circle cx="26.1" cy="31.5" r="1.6" fill="#b7d8c0"/><circle cx="33.4" cy="29.6" r="1.6" fill="#b7d8c0"/>
 </g>
 <g transform="translate(1417,5)">
  <path d="M12,18.9 L26.4,11.3 L40.9,15.7 L27.2,23.3 Z" fill="#b7d8c0"/>
  <path d="M12.5,18.8 C11,21 11.2,26 14.4,28.2" fill="none" stroke="#b7d8c0" stroke-width="2"/>
  <path d="M24.8,30.6 L40.1,24.5" fill="none" stroke="#b7d8c0" stroke-width="2"/>
  <path d="M27.2,23.3 L40.9,15.7 L40.9,17.5 L27.2,25.2 Z" fill="#b7d8c0"/>
  <path d="M16,24.1 L22.8,24.1 L22.8,40.2 L19.4,38.2 L16,39.4 Z" fill="#b7d8c0"/>
 </g>
 <g transform="translate(1467,5)" fill="none" stroke="#b7d8c0" stroke-width="1.9">
  <circle cx="26.3" cy="32.6" r="5.2" fill="#b7d8c0" stroke="none"/>
  <path d="M26.3,27 L26.3,15 M23.1,18.5 L26.3,14.8 L29.5,18.5"/>
  <path d="M21.5,27.8 L13.8,20.5 M13.6,24.3 L13.6,20.3 L17.8,20.3"/>
  <path d="M31.1,27.8 L39,20.5 M35.2,20.3 L39.4,20.3 L39.4,24.3"/>
 </g>
 <rect x="1518" y="10" width="341" height="40" rx="4" fill="#fff"/>
 <rect x="1817" y="10" width="1" height="40" fill="#666"/>
 <text x="1534" y="35.2" font-family="Liberation Sans, sans-serif" font-size="17.5" fill="#999">Find address or place</text>
 <circle cx="1836" cy="26.9" r="6.6" fill="none" stroke="#333" stroke-width="2.3"/>
 <path d="M1841,32 L1846.5,37.5" stroke="#333" stroke-width="3" stroke-linecap="round"/>
</svg>

<!-- zoom controls -->
<div class="ctl" style="left:10px;top:62px;width:38px;height:78px">
 <svg style="position:absolute;left:0;top:0" width="38" height="77"><path d="M19,10 V28 M10,19 H28" stroke="#fff" stroke-width="2.2"/><path d="M13,55.5 H25" stroke="#fff" stroke-width="2"/></svg>
</div>
<div class="ctl" style="left:10px;top:150px;width:38px;height:39px">
 <svg width="38" height="38" viewBox="0 0 38 38"><path d="M19,9 L31,20.5 L28,20.5 L28,29.5 L22,29.5 L22,24 L16,24 L16,29.5 L10,29.5 L10,20.5 L7,20.5 Z M25.5,13 L28.5,13 L28.5,17 L25.5,14.5 Z" fill="#fff"/></svg>
</div>
<div class="ctl" style="left:10px;top:194px;width:38px;height:39px">
 <svg width="38" height="38" viewBox="0 0 38 38"><circle cx="19" cy="19" r="11.5" fill="none" stroke="#fff" stroke-width="2"/><path d="M19,7 V11 M19,27 V31 M7,19 H11 M27,19 H31" stroke="#fff" stroke-width="2"/></svg>
</div>
<div id="panelbtn"><svg width="24" height="70"><path d="M7,27 L16.5,35 L7,43.5" fill="none" stroke="#aaa" stroke-width="1.8"/></svg></div>

<!-- widget buttons -->
<div class="ctl" style="left:9px;top:771px;width:49px;height:49px">
 <svg width="49" height="49"><rect x="12.5" y="12.5" width="24" height="24" fill="none" stroke="#fff" stroke-width="1.6"/><path d="M24,17 A8,8 0 1 0 32,25 L24,25 Z" fill="#fff"/><path d="M25.5,15.5 A8,8 0 0 1 33.5,23.5 L25.5,23.5 Z" fill="#fff"/></svg>
</div>
<div class="ctl" style="left:71px;top:771px;width:49px;height:49px">
 <svg width="49" height="49"><path d="M24.5,11 C21.5,11 19.5,13.3 19.5,16 C19.5,19.5 24.5,25 24.5,25 C24.5,25 29.5,19.5 29.5,16 C29.5,13.3 27.5,11 24.5,11 Z" fill="#fff"/><circle cx="24.5" cy="16" r="2" fill="#555"/><path d="M24.5,25 V35 M24.5,29 L14.5,34 M24.5,29 L34.5,34" stroke="#fff" stroke-width="1.3"/><circle cx="14.5" cy="34" r="1.8" fill="#fff"/><circle cx="34.5" cy="34" r="1.8" fill="#fff"/><circle cx="24.5" cy="35.5" r="1.8" fill="#fff"/></svg>
</div>
<div class="ctl" style="left:134px;top:771px;width:49px;height:49px">
 <svg width="49" height="49"><rect x="12.5" y="12.5" width="24" height="24" fill="none" stroke="#fff" stroke-width="1.6"/><path d="M24,17 A8,8 0 1 0 32,25 L24,25 Z" fill="#fff"/><path d="M25.5,15.5 A8,8 0 0 1 33.5,23.5 L25.5,23.5 Z" fill="#fff"/></svg>
</div>

<div id="scale"></div>
<div id="scaletx">10mi</div>
<div id="coords"><svg style="position:absolute;left:2px;top:2px" width="18" height="17"><path d="M9,2 V5 M9,12 V15 M2,8.5 H5 M13,8.5 H16" stroke="#ccc" stroke-width="1.5"/><rect x="7.5" y="7" width="3" height="3" fill="#ccc"/></svg><div class="sep"></div><div class="tx">5.907 12.496 Degrees</div></div>
<div id="bottombtn"><svg width="75" height="21"><path d="M32,15 L38,9 L44,15 Z" fill="#ccc"/></svg></div>
<div id="attr">Esri, HERE</div>

<!-- legend -->
<div id="legend">
 <div id="lhead"><div class="t">Legend</div>
  <svg style="position:absolute;left:368px;top:13px" width="22" height="18"><path d="M3,9 L10,3 L17,9 M3,15 L10,9 L17,15" fill="none" stroke="#fff" stroke-width="2.2"/></svg>
  <svg style="position:absolute;left:414px;top:13px" width="18" height="18"><path d="M3,3 L14,14 M14,3 L3,14" stroke="#fff" stroke-width="2.4"/></svg>
 </div>
 <div id="ltrack"></div><div id="lthumb"></div>
 <div class="lt" style="top:64px;letter-spacing:0.33px">validated health facilities zamfara</div>
 <svg style="position:absolute;left:29px;top:94px" width="22" height="22" viewBox="-11 -10 22 22"><circle r="7" fill="#e8202a"/><path d="M-1.6,-4.5h3.2v2.9h2.9v3.2h-2.9v2.9h-3.2v-2.9h-2.9v-3.2h2.9z" fill="#fff"/><rect x="-7.5" y="7.8" width="15" height="1.3" fill="#c0303a"/></svg>
 <div class="lt" style="top:141px;letter-spacing:0.35px">eHealth_health_facilities</div>
 <svg style="position:absolute;left:29px;top:169px" width="22" height="22" viewBox="-11 -10 22 22"><circle r="7.3" fill="#2d8c55"/><path d="M-1.9,-5.8h3.8v3.9h3.9v3.8h-3.9v3.9h-3.8v-3.9h-3.9v-3.8h3.9z" fill="#fff"/></svg>
 <div class="lt" style="top:216px;letter-spacing:0.42px">suitable</div>
 <svg style="position:absolute;left:26px;top:254px" width="26" height="26"><path d="M0.8,0.8 L25.8,13.8 L25.8,24.8 L0.8,24.8 Z" fill="#6de03b"/></svg>
 <div class="lt" style="top:313px;line-height:21px"><span style="letter-spacing:0.51px">Area with population greather than 1000 with</span><br><span style="letter-spacing:0.3px">no acess to health facilitites</span></div>
 <div class="ls" style="top:369px;letter-spacing:0.49px">Pop with low access to healthcare</div>
 <svg style="position:absolute;left:0;top:380px" width="140" height="460">
  <circle cx="75.5" cy="65" r="49.5" fill="#7a300b"/>
  <circle cx="75.5" cy="170" r="40" fill="#ad4310"/>
  <circle cx="75.5" cy="255.4" r="30" fill="#e5550f"/>
  <circle cx="75.5" cy="320.4" r="20" fill="#e60e0e"/>
  <circle cx="75" cy="367" r="10" fill="#7b5812"/>
 </svg>
 <div class="lv" style="top:437px">&gt; 4,458 - 9,327</div>
 <div class="lv" style="top:542px">&gt; 2,897 - 4,458</div>
 <div class="lv" style="top:627px">&gt; 1,866 - 2,897</div>
 <div class="lv" style="top:692px">&gt; 1,321 - 1,866</div>
 <div class="lv" style="top:738px">1,001 - 1,321</div>
 <div class="lt" style="top:795px;letter-spacing:0.26px">Zamfara State Boundary</div>
 <svg style="position:absolute;left:24px;top:828px" width="20" height="10"><path d="M2,2.5 L14,8.5 L14,9 L5,9 L5,6.5 L2,9 Z" fill="#6e2c0c"/></svg>
</div>
<div id="rborder"></div>
<div id="bborder"></div>
</body></html>
